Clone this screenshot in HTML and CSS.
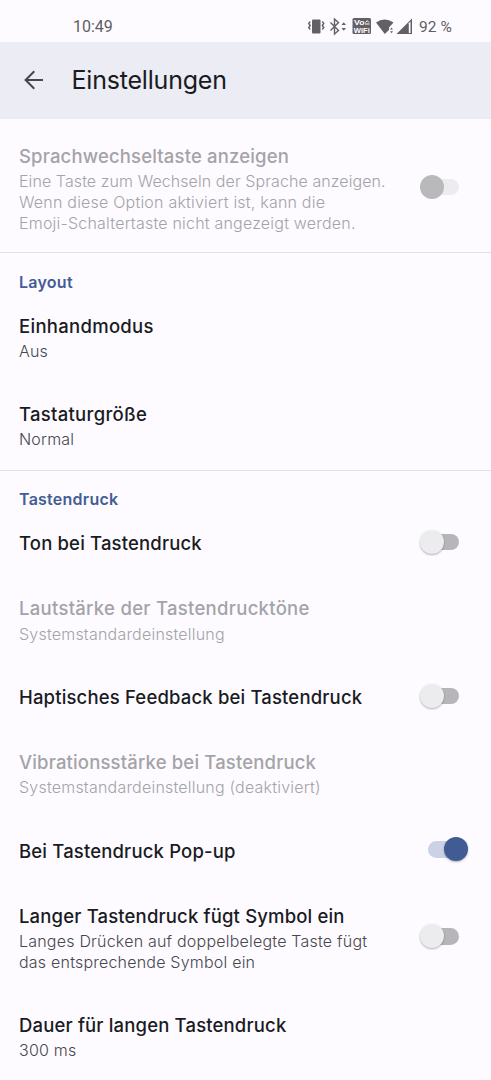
FILE: index.html
```
<!DOCTYPE html>
<html lang="de">
<head>
<meta charset="utf-8">
<title>Einstellungen</title>
<link rel="stylesheet" href="styles.css">
</head>
<body>
<div class="statusbar">
  <span class="clock">10:49</span>
  <svg class="status-icons" viewBox="0 0 106 20" width="106" height="20">
    <g fill="#626064">
      <rect x="5" y="2.500" width="8.500" height="14" rx="1"/>
      <path d="M3.200 4.500L1.700 6.500 3.200 8.500 1.700 10.500 3.200 12.500M15.300 4.500l1.500 2-1.500 2 1.500 2-1.500 2" fill="none" stroke="#626064" stroke-width="1.400"/>
      <path d="M23.500 5.500l8 8-4 3.500V2l4 3.500-8 8" fill="none" stroke="#626064" stroke-width="1.400"/>
      <path d="M34.500 8l2.200-2.700L39 8zM34.500 11l2.200 2.700L39 11z"/>
      <rect x="45.500" y="1" width="18.500" height="16" rx="1.500"/>
      <path d="M69 5.500Q77.500-.5 86.500 5.500L82 10.500v2.500L77.800 17z"/>
      <path d="M83 12.500l1.500-2 1.500 2zM83 14.300l1.500 2 1.500-2z"/>
      <path d="M89.500 17L105 1.500V17z"/>
    </g>
    <path d="M101.800 6.200l1.700-1.700V16h-1.700z" fill="#fdfbff"/>
    <text class="badge-text" x="47" y="8.300" textLength="10.500" lengthAdjust="spacingAndGlyphs">Vo</text>
    <path d="M58 7h4.500M58.500 5.500l1.700-1.800L62 5.500" fill="none" stroke="#fff" stroke-width="1"/>
    <text class="badge-text" x="46.800" y="15.800" textLength="16" lengthAdjust="spacingAndGlyphs">WiFi</text>
  </svg>
  <span class="battery">92 %</span>
</div>
<header class="appbar">
  <svg class="back" viewBox="0 0 20 20" width="20" height="20"><path d="M19 10H2M10.300 1.300L1.600 10l8.700 8.700" fill="none" stroke="#46464b" stroke-width="2"/></svg>
  <h1 class="heading">Einstellungen</h1>
</header>
<main class="settings">
  <section class="group first">
    <div class="row disabled">
      <div class="text"><div class="title">Sprachwechseltaste anzeigen</div><div class="summary"><span class="tight">Eine Taste zum Wechseln der Sprache anzeigen.</span><br>Wenn diese Option aktiviert ist, kann die<br>Emoji-Schaltertaste nicht angezeigt werden.</div></div>
      <span class="switch"></span>
    </div>
  </section>
  <section class="group">
    <h2 class="label">Layout</h2>
    <div class="row"><div class="text"><div class="title wide">Einhandmodus</div><div class="summary">Aus</div></div></div>
    <div class="row"><div class="text"><div class="title wide">Tastaturgröße</div><div class="summary">Normal</div></div></div>
  </section>
  <section class="group keypress">
    <h2 class="label">Tastendruck</h2>
    <div class="row"><div class="text"><div class="title">Ton bei Tastendruck</div></div><span class="switch"></span></div>
    <div class="row disabled"><div class="text"><div class="title wide">Lautstärke der Tastendrucktöne</div><div class="summary">Systemstandardeinstellung</div></div></div>
    <div class="row"><div class="text"><div class="title">Haptisches Feedback bei Tastendruck</div></div><span class="switch"></span></div>
    <div class="row disabled"><div class="text"><div class="title">Vibrationsstärke bei Tastendruck</div><div class="summary">Systemstandardeinstellung (deaktiviert)</div></div></div>
    <div class="row"><div class="text"><div class="title">Bei Tastendruck Pop-up</div></div><span class="switch on"></span></div>
    <div class="row"><div class="text"><div class="title">Langer Tastendruck fügt Symbol ein</div><div class="summary">Langes Drücken auf doppelbelegte Taste fügt<br>das entsprechende Symbol ein</div></div><span class="switch"></span></div>
    <div class="row"><div class="text"><div class="title">Dauer für langen Tastendruck</div><div class="summary">300 ms</div></div></div>
  </section>
</main>
</body>
</html>
```

FILE: styles.css
```
* { box-sizing: border-box; }
body {
  margin: 0;
  height: 1080px;
  overflow: hidden;
  background: #fdfbff;
  color: #1a1b1f;
  font-family: Inter, Roboto, sans-serif;
}
.statusbar {
  display: flex;
  align-items: center;
  height: 42px;
  padding: 11px 39px 0 73px;
  font: 400 16px/20px Roboto, sans-serif;
  color: #5f5d61;
}
.clock { flex: 1; }
.status-icons { margin-right: 6px; }
.battery { letter-spacing: .1px; font-size: 15.500px; }
.badge-text { font: 700 8px "Liberation Sans", sans-serif; fill: #fff; }
.appbar {
  display: flex;
  align-items: center;
  height: 76.500px;
  padding-left: 23.500px;
  background: #ebecf4;
}
.heading {
  margin: 0 0 0 28px;
  font-size: 25px;
  font-weight: 400;
  line-height: 32px;
  letter-spacing: -.2px;
}
.group { border-top: 1.500px solid #e0dfe3; }
.group.first { border: 0; padding-top: 5px; height: 133.500px; }
.label {
  margin: 0;
  height: 40.500px;
  padding: 19px 19px 0;
  font-size: 16px;
  line-height: 20px;
  font-weight: 600;
  letter-spacing: .25px;
  color: #445d95;
}
.keypress .label { height: 39.800px; padding-top: 18px; }
.row {
  display: flex;
  align-items: center;
  padding: 20.150px 19px;
}
.text { flex: 1; white-space: nowrap; }
.title { font-size: 18.500px; font-weight: 480; line-height: 25px; letter-spacing: .16px; }
.title.wide { letter-spacing: .29px; }
.summary {
  margin-top: 2.300px;
  font-size: 16px;
  font-weight: 360;
  line-height: 20.800px;
  letter-spacing: .21px;
  color: #47474c;
}
.tight { letter-spacing: .08px; }
.disabled .title, .disabled .summary { color: #a4a3a7; }
.switch {
  position: relative;
  width: 36px;
  height: 16.500px;
  margin: 0 13px 3px 0;
  border-radius: 9px;
  background: #b7b5b9;
}
.switch::after {
  content: "";
  position: absolute;
  left: -3.500px;
  top: -4px;
  width: 24px;
  height: 24px;
  border-radius: 50%;
  background: #ececee;
  box-shadow: 0 1px 2px rgba(0, 0, 0, .3);
}
.disabled .switch { background: #ececee; }
.disabled .switch::after { background: #b9b8bb; box-shadow: none; }
.switch.on { margin-right: 8px; background: #cbd2e6; }
.switch.on::after { left: 16px; background: #415b94; }
```
